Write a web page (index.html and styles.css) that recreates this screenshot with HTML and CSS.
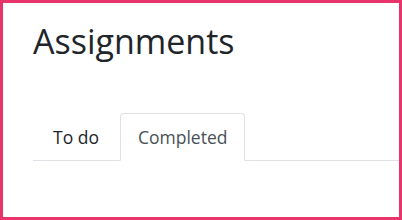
FILE: index.html
```html
<!DOCTYPE html>
<html>
<head>
<meta charset="utf-8">
<link rel="stylesheet" href="styles.css">
</head>
<body>
<div class="frame">
  <h1 class="title">Assignments</h1>
  <ul class="tabs">
    <li class="tab">To do</li>
    <li class="tab active">Completed</li>
  </ul>
</div>
</body>
</html>
```
FILE: styles.css
```css
html, body {
  margin: 0;
  padding: 0;
  background: #fff;
}
.frame {
  box-sizing: border-box;
  width: 402px;
  height: 220px;
  border: 3px solid #e8336b;
  padding: 14px 0 0 30px;
  font-family: "Open Sans", "Noto Sans", sans-serif;
}
.title {
  margin: 0;
  font-size: 34px;
  font-weight: 400;
  line-height: 48px;
  color: #212529;
}
.tabs {
  list-style: none;
  margin: 48px 0 0 0;
  padding: 0;
  display: flex;
  border-bottom: 1px solid #dee2e6;
}
.tab {
  padding: 8px 17px;
  font-size: 17.5px;
  line-height: 30px;
  color: #212529;
  border: 1px solid transparent;
  border-top-left-radius: 4px;
  border-top-right-radius: 4px;
  margin-bottom: -1px;
}
.tab:first-child {
  padding-left: 19px;
  padding-right: 20px;
}
.tab.active {
  color: #495057;
  border-color: #dee2e6 #dee2e6 #fff;
  background: #fff;
}
```
